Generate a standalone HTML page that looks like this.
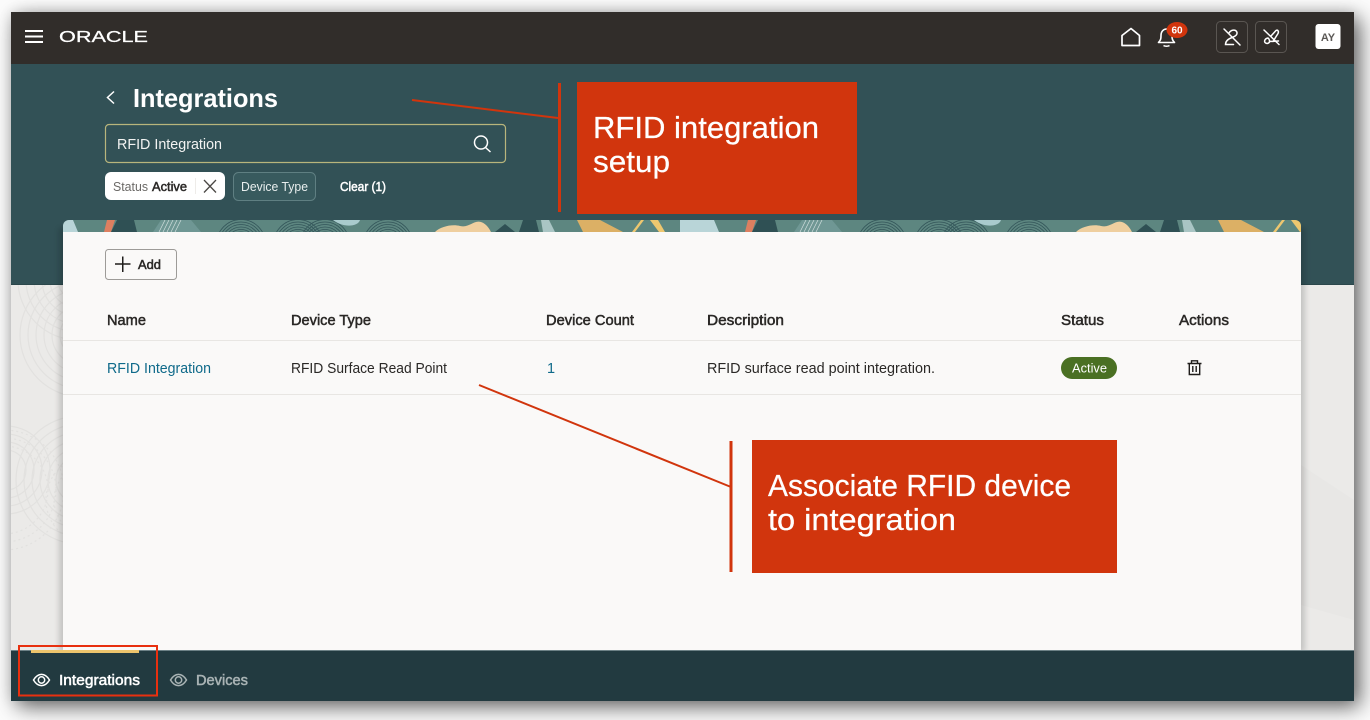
<!DOCTYPE html>
<html lang="en">
<head>
<meta charset="utf-8">
<title>Integrations</title>
<style>
html,body{margin:0;padding:0;width:1370px;height:720px;overflow:hidden;background:#fcfcfc}
#app{position:absolute;left:11px;top:12px;width:1343px;height:689px;background:#ebeae8;box-shadow:6px 6px 20px rgba(0,0,0,.6),0 0 12px rgba(0,0,0,.1)}
svg{position:absolute;left:0;top:0;filter:blur(.3px)}
text{font-family:"Liberation Sans",sans-serif}
.m{stroke-width:.5px}
.a{stroke-width:.25px}
</style>
</head>
<body>
<div id="app"></div>
<svg width="1370" height="720" viewBox="0 0 1370 720" xmlns="http://www.w3.org/2000/svg">
<defs>
<clipPath id="lm"><rect x="11" y="285" width="52" height="365"/></clipPath>
<clipPath id="strip"><path d="M63 232V226a6 6 0 0 1 6-6H1295a6 6 0 0 1 6 6V232Z"/></clipPath>
<filter id="cs" x="-5%" y="-5%" width="110%" height="110%"><feGaussianBlur stdDeviation="3"/></filter>
<g id="fp" fill="none" stroke="#34565a" stroke-width=".8">
<circle cx="0" cy="24" r="12"/><circle cx="0" cy="24" r="14.500"/><circle cx="0" cy="24" r="17"/><circle cx="0" cy="24" r="19.500"/><circle cx="0" cy="24" r="22"/><circle cx="0" cy="24" r="24.500"/>
</g>
<g id="tile">
<path d="M-24 220H10L15 232H-24Z" fill="#b9d5d8"/>
<path d="M44 220H52L48 232H41Z" fill="#dd7f60"/>
<path d="M54 220H71L74 232H48Z" fill="#2f5054"/>
<path d="M98 220H128L138 232H90Z" fill="#6f9794"/>
<g stroke="#cfdedd" stroke-width=".7"><path d="M96 232L102 220M100 232L106 220M104 232L110 220M108 232L114 220M112 232L118 220"/></g>
<use href="#fp" x="178" y="220"/>
<use href="#fp" x="235" y="220"/>
<use href="#fp" x="262" y="220"/>
<use href="#fp" x="325" y="220"/>
<path d="M270 220H297C295 227 280 228 270 220Z" fill="#a9cbcd"/>
<path d="M372 232C378 226 390 224 397 226C407 228 410 220 418 222C424 224 427 230 428 232Z" fill="#efcf9f"/>
<path d="M432 232L442 224L452 232Z" fill="#2f5054"/>
<path d="M460 220H473L476 232H456Z" fill="#2f5054"/>
<path d="M478 220H486L492 232H480Z" fill="#a9c5c4"/>
<path d="M514 220H537L560 232H520Z" fill="#dcb065"/>
<path d="M578 220H581L572 232H569Z" fill="#eec76f"/>
<path d="M587 220H595L602 232H596Z" fill="#eec76f"/>
</g>
</defs>

<!-- left margin arcs -->
<g clip-path="url(#lm)" fill="none" stroke="#e2e1df" stroke-width="1.200">
<g><circle cx="78" cy="280" r="12"/><circle cx="78" cy="280" r="20"/><circle cx="78" cy="280" r="28"/><circle cx="78" cy="280" r="36"/><circle cx="78" cy="280" r="44"/><circle cx="78" cy="280" r="52"/><circle cx="78" cy="280" r="60"/></g>
<g><circle cx="82" cy="335" r="22"/><circle cx="82" cy="335" r="30"/><circle cx="82" cy="335" r="38"/><circle cx="82" cy="335" r="46"/><circle cx="82" cy="335" r="54"/><circle cx="82" cy="335" r="62"/></g>
<g><circle cx="80" cy="480" r="24"/><circle cx="80" cy="480" r="32"/><circle cx="80" cy="480" r="40"/><circle cx="80" cy="480" r="48"/><circle cx="80" cy="480" r="56"/><circle cx="80" cy="480" r="64"/></g>
<g><circle cx="6" cy="470" r="20"/><circle cx="6" cy="470" r="28"/><circle cx="6" cy="470" r="36"/><circle cx="6" cy="470" r="44"/></g>
<g stroke-dasharray="2 3"><circle cx="4" cy="490" r="44"/><circle cx="4" cy="490" r="52"/><circle cx="4" cy="490" r="60"/><circle cx="90" cy="500" r="36"/><circle cx="90" cy="500" r="44"/></g>
</g>
<!-- right margin shading -->
<path d="M1301 465L1354 500V620L1301 605Z" fill="#e8e7e5"/>

<!-- bars -->
<rect x="11" y="64" width="1343" height="221" fill="#325156"/>
<rect x="11" y="284" width="1343" height="1" fill="#2b474b"/>
<rect x="11" y="12" width="1343" height="52" fill="#312d2a"/>

<!-- card -->
<rect x="59" y="228" width="1246" height="424" fill="#000" opacity=".16" filter="url(#cs)"/>
<rect x="63" y="232" width="1238" height="418" fill="#faf9f8"/>
<g clip-path="url(#strip)">
<rect x="63" y="220" width="1238" height="12" fill="#5d8680"/>
<use href="#tile" x="63"/>
<use href="#tile" x="704"/>
</g>

<!-- top bar -->
<path d="M25 31H43M25 36.500H43M25 42H43" stroke="#fff" stroke-width="2" fill="none"/>
<text class="a" x="59" y="42" font-size="15.500" fill="#fff" stroke="#fff" textLength="89" lengthAdjust="spacingAndGlyphs">ORACLE</text>
<path d="M1122 45.500V35.500L1131 28.500L1139.500 35.500V45.500Z" fill="none" stroke="#fff" stroke-width="1.700" stroke-linejoin="round"/>
<path d="M1158.500 42.500C1161 40 1161 38 1161 35.500C1161 31.500 1163.500 29 1166.500 29C1169.500 29 1172 31.500 1172 35.500C1172 38 1172 40 1174.500 42.500Z" fill="none" stroke="#fff" stroke-width="1.600" stroke-linejoin="round"/>
<path d="M1163.500 45.500C1165 46.500 1168 46.500 1169.500 45.500" fill="none" stroke="#fff" stroke-width="1.600"/>
<ellipse cx="1177" cy="30" rx="10.500" ry="8" fill="#d1350d"/>
<text x="1177" y="33.500" font-size="10" font-weight="700" fill="#fff" text-anchor="middle">60</text>
<rect x="1216.500" y="21.500" width="31" height="31" rx="4" fill="none" stroke="#5a5652"/>
<rect x="1255.500" y="21.500" width="31" height="31" rx="4" fill="none" stroke="#5a5652"/>
<g fill="none" stroke="#fff" stroke-width="1.500" stroke-linecap="round">
<path d="M1224 29L1240 45"/>
<path d="M1229 33C1231 29.500 1236 29 1237 32.500C1237.500 35 1235 36.500 1232 37.500C1228 39 1225.500 41 1225.500 44.500H1233.500"/>
<path d="M1264 30L1279 44.500"/>
<path d="M1271 36L1276 30.500C1278 29.500 1279 31.500 1278 33.500L1273 41.500"/>
<path d="M1268 38C1265 38.500 1264 41 1265 42.500C1267 44.500 1270 43 1269.500 40.500C1269.300 39.500 1268.800 38.500 1268 38ZM1269.500 41.500L1278.500 41"/>
</g>
<rect x="1315.500" y="24" width="25" height="25" rx="3" fill="#fff"/>
<text x="1328" y="41" font-size="11" font-weight="700" fill="#5b5855" text-anchor="middle">AY</text>

<!-- header -->
<path d="M114 91.500L107.500 97.500L114 103.500" fill="none" stroke="#fff" stroke-width="1.500"/>
<text x="133" y="107" font-size="26" font-weight="700" fill="#fff" textLength="145" lengthAdjust="spacingAndGlyphs">Integrations</text>
<rect x="105.500" y="124.500" width="400" height="38" rx="3.500" fill="none" stroke="#b8b57c" stroke-width="1.200"/>
<text x="117" y="149" font-size="14.500" fill="#f2f3f2" textLength="105" lengthAdjust="spacingAndGlyphs">RFID Integration</text>
<circle cx="481" cy="142.500" r="6.500" fill="none" stroke="#fff" stroke-width="1.500"/>
<path d="M485.500 147.500L490.500 152" stroke="#fff" stroke-width="1.500"/>
<rect x="105" y="172" width="120" height="28" rx="6" fill="#fff"/>
<text x="113" y="191" font-size="12.500" fill="#6b6966" textLength="35" lengthAdjust="spacingAndGlyphs">Status</text>
<text class="m" x="152" y="191" font-size="12.500" fill="#2c2a28" stroke="#2c2a28" textLength="35" lengthAdjust="spacingAndGlyphs">Active</text>
<path d="M195.500 178V194" stroke="#eeece9"/>
<path d="M204 180L216 192.500M216 180L204 192.500" stroke="#4b4845" stroke-width="1.300"/>
<rect x="233.500" y="172.500" width="82" height="28" rx="5" fill="#385a5e" stroke="#5f7f82"/>
<text x="241" y="191" font-size="12.500" fill="#e8eeee" textLength="67" lengthAdjust="spacingAndGlyphs">Device Type</text>
<text class="m" x="340" y="191" font-size="12.500" fill="#fff" stroke="#fff" textLength="46" lengthAdjust="spacingAndGlyphs">Clear (1)</text>

<!-- add button -->
<rect x="105.500" y="249.500" width="71" height="30" rx="3" fill="#faf9f8" stroke="#9d9b98"/>
<path d="M115 264H130.500M122.750 256.500V272" stroke="#1f1d1b" stroke-width="1.500"/>
<text class="m" x="138" y="269" font-size="12.500" fill="#2a2826" stroke="#2a2826" textLength="23" lengthAdjust="spacingAndGlyphs">Add</text>

<!-- table -->
<g class="m" font-size="14.500" fill="#2a2826" stroke="#2a2826">
<text x="107" y="325" textLength="39" lengthAdjust="spacingAndGlyphs">Name</text>
<text x="291" y="325" textLength="80" lengthAdjust="spacingAndGlyphs">Device Type</text>
<text x="546" y="325" textLength="88" lengthAdjust="spacingAndGlyphs">Device Count</text>
<text x="707" y="325" textLength="77" lengthAdjust="spacingAndGlyphs">Description</text>
<text x="1061" y="325" textLength="43" lengthAdjust="spacingAndGlyphs">Status</text>
<text x="1179" y="325" textLength="50" lengthAdjust="spacingAndGlyphs">Actions</text>
</g>
<path d="M63 340.500H1301M63 394.500H1301" stroke="#e8e6e3"/>
<g font-size="14.500" fill="#2a2826">
<text x="107" y="373" fill="#0f6a8a" textLength="104" lengthAdjust="spacingAndGlyphs">RFID Integration</text>
<text x="291" y="373" textLength="156" lengthAdjust="spacingAndGlyphs">RFID Surface Read Point</text>
<text x="547" y="373" fill="#0f6a8a">1</text>
<text x="707" y="373" textLength="228" lengthAdjust="spacingAndGlyphs">RFID surface read point integration.</text>
</g>
<rect x="1061" y="357" width="56" height="22" rx="11" fill="#4a7023"/>
<text x="1072" y="372.500" font-size="12.500" fill="#fff" textLength="35" lengthAdjust="spacingAndGlyphs">Active</text>
<path d="M1187.500 363.500H1201.500M1191.500 363.500V360.800H1197.500V363.500M1189.300 363.500V374.500H1199.700V363.500M1192.800 366V372M1196.200 366V372" fill="none" stroke="#1f1d1b" stroke-width="1.400"/>

<!-- bottom bar -->
<rect x="11" y="650" width="1343" height="51" fill="#223a40"/>
<rect x="11" y="650" width="1343" height="1" fill="#6d8186"/>
<rect x="31" y="650" width="108" height="3" fill="#ecc46c"/>
<g fill="none" stroke="#fff" stroke-width="1.500">
<path d="M33.500 680C38 672.500 45 672.500 49.500 680C45 687.500 38 687.500 33.500 680Z"/>
<circle cx="41.500" cy="680" r="3.200"/>
</g>
<text class="m" x="59" y="685" font-size="14.500" fill="#fff" stroke="#fff" textLength="81" lengthAdjust="spacingAndGlyphs">Integrations</text>
<g fill="none" stroke="#a9b3b4" stroke-width="1.500">
<path d="M170.500 680C175 672.500 182 672.500 186.500 680C182 687.500 175 687.500 170.500 680Z"/>
<circle cx="178.500" cy="680" r="3.200"/>
</g>
<text class="m" x="196" y="685" font-size="14.500" fill="#a9b3b4" stroke="#a9b3b4" textLength="52" lengthAdjust="spacingAndGlyphs">Devices</text>
<rect x="19" y="646" width="138" height="49.500" fill="none" stroke="#e8300f" stroke-width="2"/>

<!-- annotations -->
<path d="M412 100L558 118" stroke="#d1350d" stroke-width="2"/>
<rect x="558" y="83" width="3" height="129" fill="#d1350d"/>
<rect x="577" y="82" width="280" height="132" fill="#d1350d"/>
<g class="a" font-size="31" fill="#fff" stroke="#fff">
<text x="593" y="138" textLength="226" lengthAdjust="spacingAndGlyphs">RFID integration</text>
<text x="593" y="172" textLength="77" lengthAdjust="spacingAndGlyphs">setup</text>
</g>
<path d="M479 385L731 487" stroke="#d1350d" stroke-width="2"/>
<rect x="729.500" y="441" width="3" height="131" fill="#d1350d"/>
<rect x="752" y="440" width="365" height="133" fill="#d1350d"/>
<g class="a" font-size="31" fill="#fff" stroke="#fff">
<text x="768" y="496" textLength="303" lengthAdjust="spacingAndGlyphs">Associate RFID device</text>
<text x="768" y="530" textLength="188" lengthAdjust="spacingAndGlyphs">to integration</text>
</g>
</svg>
</body>
</html>
